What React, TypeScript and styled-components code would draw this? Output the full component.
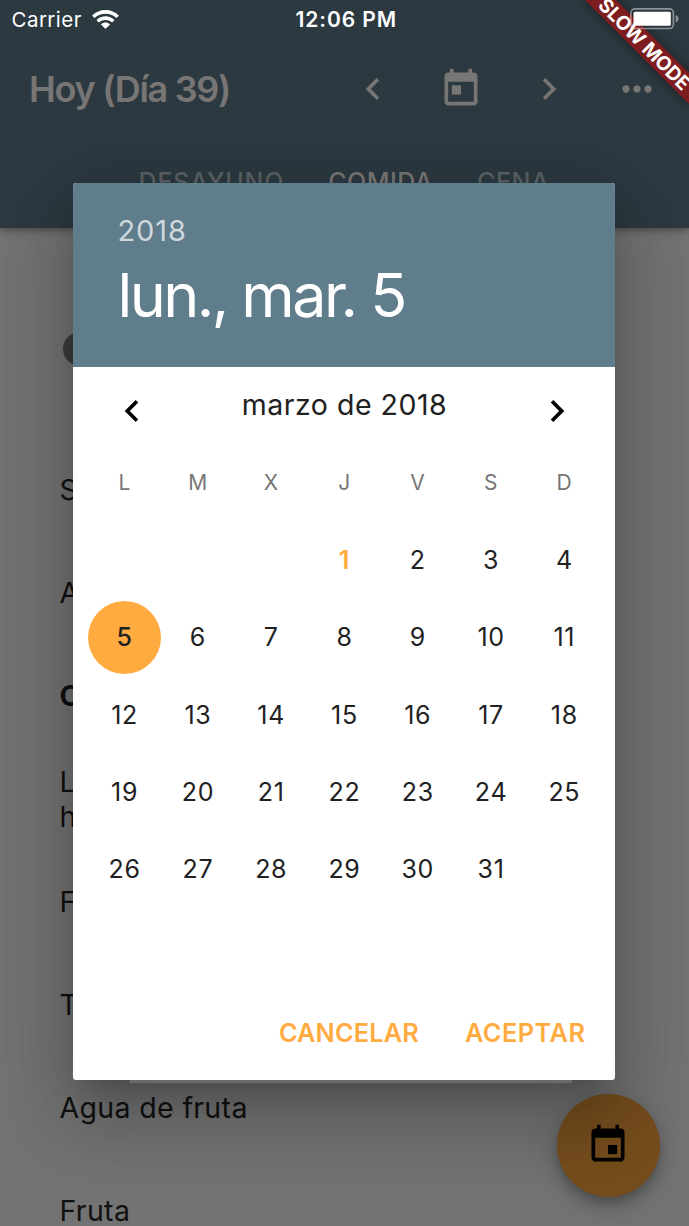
import React from "react";
import styled, { createGlobalStyle } from "styled-components";

const GlobalStyle = createGlobalStyle`
  * { box-sizing: border-box; }
  html, body { margin: 0; padding: 0; overflow: hidden; background: #737373; }
  body { font-family: Inter, "Liberation Sans", sans-serif; }
  button { font: inherit; border: 0; padding: 0; background: none; color: inherit; }
  svg { display: block; flex: none; }
`;

const Screen = styled.div`
  position: relative;
  width: 689px;
  height: 1226px;
  overflow: hidden;
  background: #737373;
`;

const AppBar = styled.header`
  position: relative;
  height: 228px;
  background: #2c3940;
  color: #777675;
  box-shadow: 0 2px 8px rgba(0, 0, 0, 0.4);
`;

const StatusBar = styled.div`
  display: grid;
  grid-template-columns: 1fr auto 1fr;
  align-items: center;
  height: 38px;
  padding: 0 10px 0 11.5px;
  color: #fff;
  font-size: 20.5px;
`;

const Carrier = styled.div`
  display: flex;
  align-items: center;
  gap: 10px;
  letter-spacing: 0.45px;
`;

const Clock = styled.div`
  margin-left: 2px;
  font-size: 21px;
  font-weight: 600;
  letter-spacing: 0.9px;
`;

const BatterySlot = styled.div`
  display: flex;
  justify-content: flex-end;
`;

const Toolbar = styled.div`
  display: flex;
  align-items: center;
  height: 101px;
  padding-left: 29px;
`;

const Title = styled.h1`
  flex: none;
  margin: 0;
  width: 322px;
  font-size: 36px;
  font-weight: 600;
  line-height: 44px;
  letter-spacing: -1.3px;
`;

const ToolbarIcon = styled.button<{ $width: number }>`
  display: flex;
  flex: none;
  align-items: center;
  justify-content: center;
  width: ${(p) => p.$width}px;
  height: 88px;
`;

const Tabs = styled.nav`
  display: flex;
  gap: 44px;
  padding: 26px 0 0 138.5px;
`;

const Tab = styled.span<{ $active?: boolean; $spacing: number }>`
  font-size: 25px;
  font-weight: 500;
  line-height: 34px;
  letter-spacing: ${(p) => p.$spacing}px;
  color: ${(p) => (p.$active ? "#777675" : "#5b6165")};
`;

const Meals = styled.main`
  padding: 104px 0 0 59.5px;
  color: #111;
`;

const Avatar = styled.div`
  width: 34px;
  height: 34px;
  margin: 0 0 73px 3px;
  border-radius: 50%;
  background: #3b3b3b;
`;

const MealRow = styled.div<{ $bold?: boolean; $twoLines?: boolean }>`
  display: flex;
  align-items: center;
  height: 102.9px;
  font-size: 28.5px;
  line-height: ${(p) => (p.$twoLines ? 35 : 28)}px;
  font-weight: ${(p) => (p.$bold ? 700 : 400)};
  letter-spacing: 0.35px;
  white-space: pre-line;
`;

const Fab = styled.button`
  position: absolute;
  left: 556.5px;
  top: 1093.5px;
  display: flex;
  align-items: center;
  justify-content: center;
  width: 103px;
  height: 103px;
  border-radius: 50%;
  background: #754d1d;
  color: #000;
  box-shadow: 0 6px 10px -2px rgba(0, 0, 0, 0.2), 0 11px 18px rgba(0, 0, 0, 0.14),
    0 2px 33px rgba(0, 0, 0, 0.12);
`;

const Dialog = styled.section`
  position: absolute;
  left: 73.49px;
  top: 183px;
  display: flex;
  flex-direction: column;
  width: 542px;
  height: 897px;
  border-radius: 3px;
  background: #fff;
  box-shadow: 0 20px 28px -13px rgba(0, 0, 0, 0.2), 0 44px 70px 5px rgba(0, 0, 0, 0.14),
    0 16px 84px 15px rgba(0, 0, 0, 0.12);
`;

const DialogHeader = styled.div`
  height: 184px;
  padding: 29px 44px 0;
  border-radius: 3px 3px 0 0;
  background: #607d8b;
  color: #fff;
`;

const Year = styled.div`
  font-size: 29px;
  line-height: 38px;
  letter-spacing: 0.9px;
  color: #cfd8dc;
`;

const PickedDate = styled.div`
  font-size: 61px;
  line-height: 76px;
  margin-top: 7px;
  letter-spacing: -2.55px;
  white-space: nowrap;
`;

const MonthBar = styled.div`
  display: flex;
  justify-content: space-between;
  height: 77px;
  padding: 0 14.5px;
`;

const MonthName = styled.div`
  font-size: 28.5px;
  line-height: 76px;
  letter-spacing: 0.5px;
  color: #212121;
`;

const MonthArrow = styled.button`
  display: flex;
  align-items: center;
  justify-content: center;
  width: 88px;
  height: 88px;
`;

const Grid = styled.div`
  display: grid;
  grid-template-columns: repeat(7, 1fr);
  grid-auto-rows: 77.3px;
  padding: 0 14.5px;
`;

const Cell = styled.div`
  display: flex;
  align-items: center;
  justify-content: center;
`;

const Weekday = styled(Cell)`
  font-size: 21px;
  letter-spacing: 0.5px;
  color: #757575;
`;

const Day = styled(Cell)<{ $today?: boolean }>`
  font-size: 25px;
  letter-spacing: 0.7px;
  color: ${(p) => (p.$today ? "#ffab40" : "#212121")};
  font-weight: ${(p) => (p.$today ? 600 : 400)};
`;

const Selected = styled.span`
  display: flex;
  align-items: center;
  justify-content: center;
  width: 73px;
  height: 73px;
  border-radius: 50%;
  background: #ffab40;
  font-weight: 500;
`;

const Actions = styled.div`
  display: flex;
  justify-content: flex-end;
  gap: 46px;
  margin-top: auto;
  height: 95px;
  padding-right: 30px;
  color: #ffab40;
  font-size: 25.3px;
  font-weight: 600;
  line-height: 95px;
`;

const Action = styled.button<{ $spacing: number }>`
  letter-spacing: ${(p) => p.$spacing}px;
`;

const DividerEdge = styled.div`
  position: absolute;
  left: 130px;
  top: 1080px;
  width: 442px;
  height: 2.5px;
  background: #6b6b6b;
`;

const BannerClip = styled.div`
  position: absolute;
  inset: 0;
  overflow: hidden;
  pointer-events: none;
`;

const Banner = styled.div`
  position: absolute;
  left: 571px;
  top: 33px;
  width: 147px;
  height: 22px;
  transform: rotate(45deg);
  background: #7e1d1f;
  box-shadow: 0 0 11px rgba(0, 0, 0, 0.5);
  color: #fff;
  font-size: 19.5px;
  font-weight: 700;
  line-height: 22px;
  letter-spacing: -0.15px;
  text-align: center;
  white-space: nowrap;
`;

const StatusLayer = styled.div`
  position: absolute;
  inset: 0 0 auto 0;
`;

const StatusSpace = styled.div`
  height: 38px;
`;

const WifiIcon = () => (
  <svg width="27" height="19" viewBox="0 0 27 19" fill="#fff">
    <path d="M13.5 0C8.4 0 3.8 2 .4 5.2a.5.5 0 0 0 0 .7l1.8 1.8c.2.2.5.2.7 0C5.7 5.2 9.4 3.7 13.5 3.7s7.8 1.5 10.6 4c.2.2.5.2.7 0l1.8-1.8a.5.5 0 0 0 0-.7C23.2 2 18.6 0 13.5 0z" />
    <path d="M13.5 6.3c-3.4 0-6.400 1.300-8.700 3.400a.5.5 0 0 0 0 .7l1.8 1.8c.2.2.5.2.7 0 1.7-1.500 3.800-2.300 6.200-2.300s4.500.9 6.200 2.300c.2.2.5.2.7 0l1.8-1.8a.5.5 0 0 0 0-.7c-2.300-2.100-5.300-3.400-8.700-3.400z" />
    <path d="M13.5 12.4c-1.700 0-3.200.6-4.300 1.600a.5.5 0 0 0 0 .7l3.9 3.9c.2.2.6.2.8 0l3.9-3.9a.5.5 0 0 0 0-.7c-1.100-1-2.600-1.600-4.300-1.600z" />
  </svg>
);

const BatteryIcon = () => (
  <svg width="49" height="22" viewBox="0 0 49 22" fill="#fff">
    <rect x=".9" y=".9" width="42.5" height="19.6" rx="4" fill="none" stroke="#fff" strokeOpacity=".45" strokeWidth="1.6" />
    <rect x="3.500" y="3.700" width="37.3" height="14" rx="1.5" />
    <path d="M45.700 7c1.800.7 2.800 2 2.800 3.800s-1 3.100-2.800 3.800z" fillOpacity=".45" />
  </svg>
);

const Chevron = ({ right }: { right?: boolean }) => (
  <svg width="44" height="44" viewBox="0 0 24 24" fill="currentColor">
    {right ? (
      <path d="M10 6 8.590 7.410 13.170 12l-4.580 4.590L10 18l6-6z" />
    ) : (
      <path d="M15.410 7.410 14 6l-6 6 6 6 1.410-1.410L10.830 12z" />
    )}
  </svg>
);

const CalendarIcon = ({ event }: { event?: boolean }) => (
  <svg width="44" height="44" viewBox="0 0 24 24" fill="currentColor">
    <path d="M19 3h-1V1h-2v2H8V1H6v2H5c-1.110 0-1.990.9-1.990 2L3 19c0 1.100.890 2 2 2h14c1.100 0 2-.9 2-2V5c0-1.100-.9-2-2-2zm0 16H5V8h14v11z" />
    {event ? <path d="M12 12h5v5h-5z" /> : <path d="M7 10h5v5H7z" />}
  </svg>
);

const MoreIcon = () => (
  <svg width="44" height="44" viewBox="0 0 24 24" fill="currentColor">
    <path d="M6 10c-1.100 0-2 .9-2 2s.9 2 2 2 2-.9 2-2-.9-2-2-2zm12 0c-1.100 0-2 .9-2 2s.9 2 2 2 2-.9 2-2-.9-2-2-2zm-6 0c-1.100 0-2 .9-2 2s.9 2 2 2 2-.9 2-2-.9-2-2-2z" />
  </svg>
);

const weekdays = ["L", "M", "X", "J", "V", "S", "D"];
const leadingBlanks = 3;
const days = Array.from({ length: 31 }, (_, i) => i + 1);

export default function App() {
  return (
    <Screen>
      <GlobalStyle />
      <AppBar>
        <StatusSpace />
        <Toolbar>
          <Title>Hoy (Día 39)</Title>
          <ToolbarIcon $width={44}><Chevron /></ToolbarIcon>
          <ToolbarIcon $width={132}><CalendarIcon /></ToolbarIcon>
          <ToolbarIcon $width={44}><Chevron right /></ToolbarIcon>
          <ToolbarIcon $width={132}><MoreIcon /></ToolbarIcon>
        </Toolbar>
        <Tabs>
          <Tab $spacing={0.85}>DESAYUNO</Tab>
          <Tab $active $spacing={0.45}>COMIDA</Tab>
          <Tab $spacing={0.6}>CENA</Tab>
        </Tabs>
      </AppBar>
      <Meals>
        <Avatar />
        <MealRow>S</MealRow>
        <MealRow>A</MealRow>
        <MealRow $bold>C</MealRow>
        <MealRow $twoLines>{"L\nh"}</MealRow>
        <MealRow>F</MealRow>
        <MealRow>T</MealRow>
        <MealRow>Agua de fruta</MealRow>
        <MealRow>Fruta</MealRow>
      </Meals>
      <Fab><CalendarIcon event /></Fab>
      <Dialog>
        <DialogHeader>
          <Year>2018</Year>
          <PickedDate>lun., mar. 5</PickedDate>
        </DialogHeader>
        <MonthBar>
          <MonthArrow><Chevron /></MonthArrow>
          <MonthName>marzo de 2018</MonthName>
          <MonthArrow><Chevron right /></MonthArrow>
        </MonthBar>
        <Grid>
          {weekdays.map((d) => <Weekday key={d}>{d}</Weekday>)}
          {Array.from({ length: leadingBlanks }, (_, i) => <Cell key={`blank${i}`} />)}
          {days.map((d) => (
            <Day key={d} $today={d === 1}>{d === 5 ? <Selected>{d}</Selected> : d}</Day>
          ))}
        </Grid>
        <Actions>
          <Action $spacing={0.15}>CANCELAR</Action>
          <Action $spacing={0.5}>ACEPTAR</Action>
        </Actions>
      </Dialog>
      <DividerEdge />
      <BannerClip>
        <Banner>SLOW MODE</Banner>
      </BannerClip>
      <StatusLayer>
        <StatusBar>
          <Carrier>Carrier <WifiIcon /></Carrier>
          <Clock>12:06 PM</Clock>
          <BatterySlot><BatteryIcon /></BatterySlot>
        </StatusBar>
      </StatusLayer>
    </Screen>
  );
}
